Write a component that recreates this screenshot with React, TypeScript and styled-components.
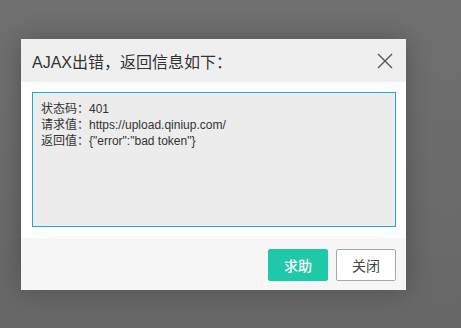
import styled, { createGlobalStyle } from 'styled-components';

const GlobalStyle = createGlobalStyle`
    html, body {
        margin: 0;
        padding: 0;
        background: #6c6c6c;
    }
    body {
        font-family: 'Liberation Sans', Arial, 'Noto Sans CJK SC', sans-serif;
    }
`;

function App() {
    return (
        <Overlay>
            <GlobalStyle />
            <Dialog>
                <Header>
                    <Title>AJAX出错，返回信息如下：</Title>
                    <CloseButton aria-label="关闭">
                        <svg width="16" height="16" viewBox="0 0 16 16">
                            <path
                                d="M1 1 L15 15 M15 1 L1 15"
                                stroke="#555"
                                strokeWidth="1.4"
                                fill="none"
                            />
                        </svg>
                    </CloseButton>
                </Header>
                <Body>
                    <Message readOnly
                        value={
                            '状态码：401\n请求值：https://upload.qiniup.com/\n返回值：{"error":"bad token"}'
                        }
                    />
                </Body>
                <Footer>
                    <Button $primary>求助</Button>
                    <Button>关闭</Button>
                </Footer>
            </Dialog>
        </Overlay>
    );
}

export default App;

const Overlay = styled.div`
    width: 461px;
    height: 328px;
    box-sizing: border-box;
    padding: 39px 0 0 21px;
    background: linear-gradient(180deg, #707070 0%, #676767 100%);
`;

const Dialog = styled.div`
    width: 385px;
    height: 251px;
    display: flex;
    flex-direction: column;
    background: #fff;
    box-shadow: 0 0 24px rgba(0, 0, 0, 0.25);
`;

const Header = styled.div`
    height: 43px;
    display: flex;
    align-items: center;
    justify-content: space-between;
    padding: 0 13px 0 11px;
    background: #efefef;
`;

const Title = styled.h3`
    margin: 0;
    font-size: 16px;
    font-weight: normal;
    color: #333;
`;

const CloseButton = styled.button`
    border: none;
    background: none;
    padding: 0;
    width: 16px;
    height: 16px;
    display: flex;
    cursor: pointer;
`;

const Body = styled.div`
    padding: 10px 10px 11px 11px;
    background: #fff;
`;

const Message = styled.textarea`
    display: block;
    width: 364px;
    height: 135px;
    box-sizing: border-box;
    margin: 0;
    padding: 8px 8px;
    resize: none;
    border: 1px solid #22a6d6;
    outline: none;
    background: #ececec;
    color: #333;
    font-family: 'Liberation Sans', Arial, 'Noto Sans CJK SC', sans-serif;
    font-size: 12px;
    line-height: 16px;
`;

const Footer = styled.div`
    flex: 1;
    display: flex;
    justify-content: flex-end;
    align-items: flex-start;
    gap: 8px;
    padding: 11px 10px 0 0;
    background: #f6f6f6;
`;

const Button = styled.button<{ $primary?: boolean }>`
    width: 60px;
    height: 32px;
    box-sizing: border-box;
    border-radius: 2px;
    font-family: 'Noto Sans CJK SC', sans-serif;
    font-size: 14px;
    cursor: pointer;
    border: 1px solid ${(p) => (p.$primary ? '#1fc8a6' : '#a8a8a8')};
    background: ${(p) => (p.$primary ? '#1fc8a6' : '#fff')};
    color: ${(p) => (p.$primary ? '#fff' : '#444')};
    font-weight: ${(p) => (p.$primary ? 500 : 400)};
`;
